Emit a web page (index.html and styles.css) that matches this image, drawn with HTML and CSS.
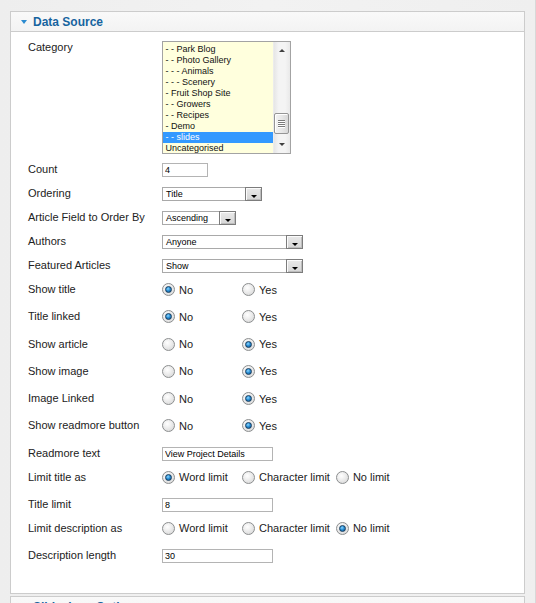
FILE: index.html
```
<!DOCTYPE html>
<html>
<head>
<meta charset="utf-8">
<link rel="stylesheet" href="styles.css">
</head>
<body>
<div class="page">
  <div class="panel">
    <div class="panel-head">
      <span class="tri-down"></span>
      <span class="panel-title">Data Source</span>
    </div>
    <div class="panel-body">
      <div class="row cat">
        <div class="label">Category</div>
        <div class="listbox">
          <div class="list">
            <div class="item">- - Park Blog</div>
            <div class="item">- - Photo Gallery</div>
            <div class="item">- - - Animals</div>
            <div class="item">- - - Scenery</div>
            <div class="item">- Fruit Shop Site</div>
            <div class="item">- - Growers</div>
            <div class="item">- - Recipes</div>
            <div class="item">- Demo</div>
            <div class="item sel">- - slides</div>
            <div class="item">Uncategorised</div>
          </div>
          <div class="sb">
            <div class="sb-btn"><span class="arr-up"></span></div>
            <div class="sb-track">
              <div class="thumb"><span></span><span></span><span></span><span></span></div>
            </div>
            <div class="sb-btn"><span class="arr-down"></span></div>
          </div>
        </div>
      </div>

      <div class="row">
        <div class="label">Count</div>
        <input class="text w46" type="text" value="4">
      </div>
      <div class="row">
        <div class="label">Ordering</div>
        <div class="select w100"><span class="val">Title</span><span class="btn"><span class="arr-down dark"></span></span></div>
      </div>
      <div class="row">
        <div class="label">Article Field to Order By</div>
        <div class="select w74"><span class="val">Ascending</span><span class="btn"><span class="arr-down dark"></span></span></div>
      </div>
      <div class="row">
        <div class="label">Authors</div>
        <div class="select w141"><span class="val">Anyone</span><span class="btn"><span class="arr-down dark"></span></span></div>
      </div>
      <div class="row">
        <div class="label">Featured Articles</div>
        <div class="select w141"><span class="val">Show</span><span class="btn"><span class="arr-down dark"></span></span></div>
      </div>

      <div class="row r">
        <div class="label">Show title</div>
        <div class="radios">
          <div class="opt"><span class="radio on"></span>No</div>
          <div class="opt"><span class="radio"></span>Yes</div>
        </div>
      </div>
      <div class="row r">
        <div class="label">Title linked</div>
        <div class="radios">
          <div class="opt"><span class="radio on"></span>No</div>
          <div class="opt"><span class="radio"></span>Yes</div>
        </div>
      </div>
      <div class="row r">
        <div class="label">Show article</div>
        <div class="radios">
          <div class="opt"><span class="radio"></span>No</div>
          <div class="opt"><span class="radio on"></span>Yes</div>
        </div>
      </div>
      <div class="row r">
        <div class="label">Show image</div>
        <div class="radios">
          <div class="opt"><span class="radio"></span>No</div>
          <div class="opt"><span class="radio on"></span>Yes</div>
        </div>
      </div>
      <div class="row r">
        <div class="label">Image Linked</div>
        <div class="radios">
          <div class="opt"><span class="radio"></span>No</div>
          <div class="opt"><span class="radio on"></span>Yes</div>
        </div>
      </div>
      <div class="row r">
        <div class="label">Show readmore button</div>
        <div class="radios">
          <div class="opt"><span class="radio"></span>No</div>
          <div class="opt"><span class="radio on"></span>Yes</div>
        </div>
      </div>

      <div class="row">
        <div class="label">Readmore text</div>
        <input class="text w111" type="text" value="View Project Details">
      </div>
      <div class="row r">
        <div class="label">Limit title as</div>
        <div class="radios">
          <div class="opt"><span class="radio on"></span>Word limit</div>
          <div class="opt"><span class="radio"></span>Character limit</div>
          <div class="opt"><span class="radio"></span>No limit</div>
        </div>
      </div>
      <div class="row">
        <div class="label">Title limit</div>
        <input class="text w111" type="text" value="8">
      </div>
      <div class="row r">
        <div class="label">Limit description as</div>
        <div class="radios">
          <div class="opt"><span class="radio"></span>Word limit</div>
          <div class="opt"><span class="radio"></span>Character limit</div>
          <div class="opt"><span class="radio on"></span>No limit</div>
        </div>
      </div>
      <div class="row">
        <div class="label">Description length</div>
        <input class="text w111" type="text" value="30">
      </div>
    </div>
  </div>

  <div class="panel second">
    <div class="panel-head">
      <span class="tri-right"></span>
      <span class="panel-title">Slideshow Options</span>
    </div>
  </div>
</div>
</body>
</html>
```
FILE: styles.css
```
html, body {
  margin: 0;
  padding: 0;
  height: 603px;
  overflow: hidden;
}
body {
  background: #f0f0f0;
  font-family: "Liberation Sans", Arial, sans-serif;
  color: #222;
}
.page {
  box-sizing: border-box;
  width: 536px;
  height: 603px;
  padding: 11px 10px 0 10px;
  border-right: 1px solid #d8d8d8;
  background: linear-gradient(90deg, #eeeeee, #f2f2f2 50%, #efefef);
}
.panel {
  border: 1px solid #cccccc;
  background: #ffffff;
}
.panel.second {
  margin-top: 2px;
}
.panel-head {
  height: 19px;
  display: flex;
  align-items: center;
  padding-left: 10px;
  background: linear-gradient(#f9f9f9, #f3f3f3);
  border-bottom: 1px solid #cccccc;
}
.tri-down {
  width: 0;
  height: 0;
  border-left: 3px solid transparent;
  border-right: 3px solid transparent;
  border-top: 4px solid #2b8bd0;
  margin-right: 6px;
  margin-top: 1px;
}
.tri-right {
  width: 0;
  height: 0;
  border-top: 3px solid transparent;
  border-bottom: 3px solid transparent;
  border-left: 4px solid #2b8bd0;
  margin-right: 8px;
}
.panel-title {
  font-size: 12px;
  font-weight: bold;
  color: #16649f;
}
.panel-body {
  padding: 4px 0 25px 17px;
}
.row {
  display: flex;
  align-items: flex-start;
  padding-top: 5px;
  height: 19px;
}
.row.r {
  height: 22.25px;
}
.row.cat {
  height: 117px;
}
.label {
  width: 134px;
  flex: none;
  font-size: 11px;
  line-height: 13px;
  color: #222;
}

/* listbox */
.listbox {
  box-sizing: border-box;
  width: 129px;
  height: 113px;
  border: 1px solid #a3a3a3;
  background: #ffffdd;
  display: flex;
}
.list {
  flex: 1;
  padding-top: 2px;
  overflow: hidden;
  font-size: 9px;
  line-height: 11px;
  color: #111;
}
.item {
  padding-left: 2.5px;
  white-space: pre;
  height: 11px;
}
.item.sel {
  background: #3399ff;
  color: #ffffff;
}
.sb {
  width: 17px;
  display: flex;
  flex-direction: column;
  background: linear-gradient(90deg, #e6e6e6, #f4f4f4 30%, #f4f4f4 70%, #e9e9e9);
  border-left: 1px solid #ececec;
  box-sizing: border-box;
}
.sb-btn {
  height: 17px;
  display: flex;
  align-items: center;
  justify-content: center;
  flex: none;
}
.sb-track {
  flex: 1;
}
.arr-up {
  width: 0;
  height: 0;
  border-left: 3.5px solid transparent;
  border-right: 3.5px solid transparent;
  border-bottom: 3px solid #404040;
}
.arr-down {
  width: 0;
  height: 0;
  border-left: 3.5px solid transparent;
  border-right: 3.5px solid transparent;
  border-top: 3px solid #404040;
}
.thumb {
  box-sizing: border-box;
  margin: 54px 1px 0 0;
  height: 21px;
  border: 1px solid #959595;
  border-radius: 2px;
  background: linear-gradient(90deg, #f4f4f4, #e8e8e8 50%, #d8d8d8);
  box-shadow: inset 1px 1px 0 #ffffff;
  display: flex;
  flex-direction: column;
  align-items: center;
  justify-content: center;
  gap: 1px;
}
.thumb span {
  width: 7px;
  height: 1px;
  background: #7a7a7a;
  box-shadow: 0 1px 0 #ffffff;
}

/* text inputs */
.text {
  box-sizing: border-box;
  height: 14px;
  margin: 0;
  padding: 0 2px;
  border: 1px solid #b4b4b4;
  font-family: "Liberation Sans", Arial, sans-serif;
  font-size: 9px;
  color: #000;
  background: #ffffff;
  outline: none;
}
.w46 { width: 46px; }
.w111 { width: 111px; }
.w100 { width: 100px; }
.w74 { width: 74px; }
.w141 { width: 141px; }

/* selects */
.select {
  box-sizing: border-box;
  height: 14px;
  border: 1px solid #a9a9a9;
  display: flex;
  align-items: center;
  background: #ffffff;
  font-size: 9px;
  color: #000;
}
.select .val {
  padding-left: 3px;
  line-height: 12px;
}
.select .btn {
  box-sizing: border-box;
  margin: -1px -1px -1px auto;
  width: 17px;
  height: 14px;
  border: 1px solid #7c7c7c;
  background: linear-gradient(#e9e9e9, #d6d6d6);
  box-shadow: inset 1px 1px 0 #fbfbfb, inset -1px -1px 0 #bdbdbd;
  display: flex;
  align-items: flex-end;
  justify-content: center;
}
.arr-down.dark {
  border-left-width: 3.5px;
  border-right-width: 3.5px;
  border-top: 3px solid #000000;
  margin-bottom: 2px;
}

/* radios */
.radios {
  display: flex;
  align-items: center;
  height: 13px;
  font-size: 11px;
  color: #222;
}
.opt {
  box-sizing: border-box;
  min-width: 80px;
  padding-right: 6px;
  display: flex;
  align-items: center;
  gap: 4px;
  white-space: nowrap;
}
.radio {
  box-sizing: border-box;
  width: 13px;
  height: 13px;
  flex: none;
  border-radius: 50%;
  border: 1px solid #8c8e8f;
  background: radial-gradient(circle at 40% 35%, #ffffff 0%, #eeeeee 40%, #d2d2d2 100%);
  display: flex;
  align-items: center;
  justify-content: center;
}
.radio.on::after {
  content: "";
  box-sizing: border-box;
  width: 7px;
  height: 7px;
  border-radius: 50%;
  border: 1px solid #173d5e;
  background: radial-gradient(circle at 40% 35%, #8fd8ff 0%, #2a8fd6 45%, #0c4c82 100%);
}
```
